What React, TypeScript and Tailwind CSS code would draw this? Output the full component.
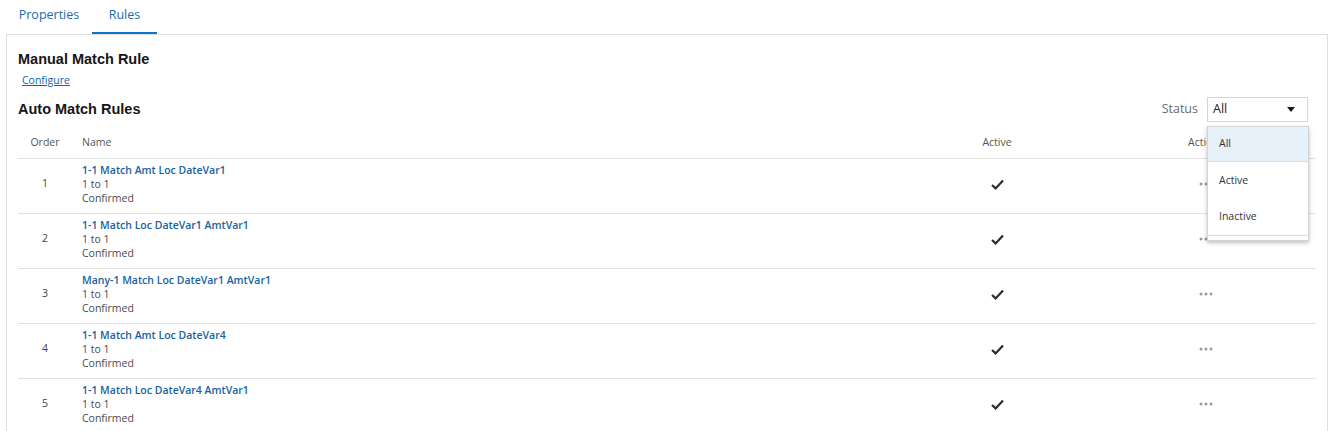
import React from "react";

const rules = [
  { order: 1, name: "1-1 Match Amt Loc DateVar1" },
  { order: 2, name: "1-1 Match Loc DateVar1 AmtVar1" },
  { order: 3, name: "Many-1 Match Loc DateVar1 AmtVar1" },
  { order: 4, name: "1-1 Match Amt Loc DateVar4" },
  { order: 5, name: "1-1 Match Loc DateVar4 AmtVar1" },
];

const Check = () => (
  <svg width="13" height="11" viewBox="0 0 13 11">
    <path d="M1 6 L4.6 9.4 L12 1.6" fill="none" stroke="#2b2b2b" strokeWidth="2.2" />
  </svg>
);

const Dots = () => (
  <svg width="14" height="4" viewBox="0 0 14 4">
    <circle cx="2" cy="2" r="1.5" fill="#999" />
    <circle cx="7" cy="2" r="1.5" fill="#999" />
    <circle cx="12" cy="2" r="1.5" fill="#999" />
  </svg>
);

const App = () => {
  return (
    <div className="w-[1328px] h-[431px] overflow-hidden bg-white font-['Open_Sans',sans-serif]">
      {/* tabs */}
      <div className="flex h-[34px] ml-[6px] text-[12.5px] text-[#1d6bab]">
        <div className="w-[86px] flex items-center justify-center pb-[3px]">Properties</div>
        <div className="w-[65px] flex items-center justify-center pb-[1px] border-b-2 border-[#0f72c2]">
          Rules
        </div>
      </div>

      {/* panel */}
      <div className="ml-[6px] h-[400px] border border-[#dedede] border-b-0 pl-[11px] pr-[10px]">
        <div className="pt-[15px] font-['Liberation_Sans',sans-serif] font-bold text-[14.5px] text-[#161616] leading-[18px]">
          Manual Match Rule
        </div>
        <div className="mt-[5px] ml-[4px] text-[10.5px] leading-[14px] text-[#0d64a8] underline">
          Configure
        </div>

        <div className="relative flex items-center justify-between mt-[10px] h-[25px]">
          <div className="font-['Liberation_Sans',sans-serif] font-bold text-[14.5px] text-[#161616]">
            Auto Match Rules
          </div>
          <div className="flex items-center gap-[9px] mr-[9px]">
            <span className="text-[12.5px] text-[#6b6b6b]">Status</span>
            <div className="relative w-[101px] h-[25px] border border-[#d6d6d6] flex items-center justify-between pl-[5px] pr-[12px]">
              <span className="text-[12.5px] text-[#222]">All</span>
              <svg width="8" height="5" viewBox="0 0 8 5">
                <path d="M0 0 H8 L4 5 Z" fill="#1a1a1a" />
              </svg>
              <div className="absolute left-[-1px] top-[28px] w-[102px] h-[115px] bg-white border border-[#d4d4d4] shadow-[0_2px_4px_rgba(0,0,0,0.25)] z-10 text-[10.5px] text-[#333]">
                <div className="h-[35px] bg-[#e6f1f9] border-b border-[#dcdcdc] flex items-center pl-[11px]">All</div>
                <div className="h-[37px] flex items-center pl-[11px]">Active</div>
                <div className="h-[37px] flex items-center pl-[11px] border-b border-[#dcdcdc]">Inactive</div>
              </div>
            </div>
          </div>
        </div>

        {/* table */}
        <div className="w-[1298px] text-[10.5px]">
          <div className="grid grid-cols-[54px_1fr_120px_99px_100px_60px] h-[37px] pt-[5px] items-center border-b border-[#e2e2e2] text-[#555]">
            <div className="text-center">Order</div>
            <div className="pl-[10px]">Name</div>
            <div className="text-center">Active</div>
            <div />
            <div className="text-center">Actions</div>
            <div />
          </div>
          {rules.map((r) => (
            <div
              key={r.order}
              className="grid grid-cols-[54px_1fr_120px_99px_100px_60px] h-[55px] pb-[4px] items-center border-b border-[#e2e2e2]"
            >
              <div className="text-center text-[#444]">{r.order}</div>
              <div className="pl-[10px] leading-[14px]">
                <div className="font-semibold text-[#1762a3]">{r.name}</div>
                <div className="text-[#4a4a4a]">1 to 1</div>
                <div className="text-[#4a4a4a]">Confirmed</div>
              </div>
              <div className="flex justify-center">
                <Check />
              </div>
              <div />
              <div className="flex justify-center">
                <Dots />
              </div>
              <div />
            </div>
          ))}
        </div>
      </div>
    </div>
  );
};

export default App;
